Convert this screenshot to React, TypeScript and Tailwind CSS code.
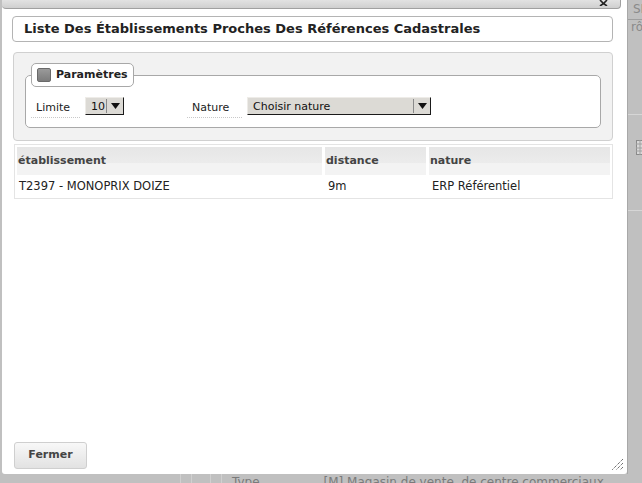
const font = "font-['DejaVu_Sans','Liberation_Sans',sans-serif]";

function NativeSelect({ value, width, sep }: { value: string; width: string; sep: string }) {
  return (
    <div
      className={`flex h-[18px] items-center border-t border-l border-t-[#eeece8] border-l-[#eeece8] border-r border-b border-r-[#1a1a1a] border-b-[#1a1a1a] bg-[#dcdad5] text-[11px] text-[#111] ${width}`}
    >
      <span className="pl-[5px] leading-none">{value}</span>
      <span className={`ml-auto h-[14px] w-px bg-[#8a8a8a] ${sep}`} />
      <span className="flex w-[16px] justify-center">
        <svg width="9" height="6" viewBox="0 0 9 6">
          <path d="M0 0h9L4.5 6z" fill="#111" />
        </svg>
      </span>
    </div>
  );
}

function Field({ label, width, children }: { label: string; width: string; children: React.ReactNode }) {
  return (
    <div className="flex items-start">
      <span className={`border-b border-dotted border-[#c8c8c8] pb-[3px] pl-[5px] pt-[4px] text-[11px] leading-[13px] text-[#222] ${width}`}>
        {label}
      </span>
      <div className="ml-[5px]">{children}</div>
    </div>
  );
}

export default function App() {
  return (
    <div className={`flex h-[483px] w-[642px] flex-col overflow-hidden bg-[#c0c0c0] ${font}`}>
      <div className="flex h-[474px] shrink-0">
        {/* dialog */}
        <div className="ml-[2px] flex w-[625px] shrink-0 flex-col rounded-b-[3px] bg-white">
          <div className="mr-[6px] flex h-[9px] shrink-0 items-end justify-end rounded-b-[4px] border-b border-r border-[#a0a0a0] bg-gradient-to-b from-[#e2e2e2] to-[#cfcfcf] pr-[12px]">
            <svg width="9" height="6" viewBox="0 0 9 6" className="mb-[2px]">
              <path d="M1 0l3.5 3.5L8 0M1 6l3.5-2.5L8 6" stroke="#222" strokeWidth="1.6" fill="none" />
            </svg>
          </div>

          <div className="ml-[10px] mr-[14px] mt-[7px] flex h-[26px] items-center rounded-[4px] border border-[#b4b4b4] px-[11px] text-[13px] font-bold text-[#222]">
            Liste Des Établissements Proches Des Références Cadastrales
          </div>

          <div className="ml-[11px] mr-[14px] mt-[10px] h-[89px] rounded-[4px] border border-[#d0d0d0] bg-[#f2f2f2] px-[11px] pt-[10px]">
            <fieldset className="h-[65px] rounded-[5px] border border-[#a8a8a8] bg-white px-[5px]">
              <legend className="flex h-[24px] items-center gap-[5px] rounded-[5px] border border-[#a8a8a8] bg-white px-[5px] text-[11px] font-bold text-[#222]">
                <span className="h-[14px] w-[14px] rounded-[2px] border border-[#6a6a6a] bg-gradient-to-b from-[#9a9a9a] to-[#7c7c7c]" />
                Paramètres
              </legend>
              <div className="mt-[10px] flex gap-[63px]">
                <Field label="Limite" width="w-[49px]">
                  <NativeSelect value="10" width="w-[39px]" sep="ml-[2px]" />
                </Field>
                <Field label="Nature" width="w-[55px]">
                  <NativeSelect value="Choisir nature" width="w-[184px]" sep="" />
                </Field>
              </div>
            </fieldset>
          </div>

          <div className="ml-[12px] mr-[14px] mt-[3px] border border-[#e4e4e4] p-[2px]">
            <div className="grid grid-cols-[305px_101px_1fr] gap-x-[3px] gap-y-[1px] text-[11px]">
              {["établissement", "distance", "nature"].map((h) => (
                <div
                  key={h}
                  className="flex h-[28px] items-center bg-[linear-gradient(#e6e6e6_0%,#ececec_58%,#f3f3f3_59%,#f3f3f3_100%)] pl-[1px] font-bold text-[#444]"
                >
                  {h}
                </div>
              ))}
              <div className="flex h-[20px] items-center pl-[2px] pt-[1px] text-[11.5px] text-[#222]">T2397 - MONOPRIX DOIZE</div>
              <div className="flex h-[20px] items-center pl-[3px] pt-[1px] text-[11.5px] text-[#222]">9m</div>
              <div className="flex h-[20px] items-center pl-[3px] pt-[1px] text-[11.5px] text-[#222]">ERP Référentiel</div>
            </div>
          </div>

          <div className="mt-auto flex items-end justify-between pb-[3px] pl-[12px] pr-[3px]">
            <button className="mb-[2px] h-[27px] w-[73px] rounded-[3px] border border-[#cfcfcf] bg-gradient-to-b from-[#f8f8f8] to-[#e2e2e2] text-[11px] font-bold text-[#444]">
              Fermer
            </button>
            <svg width="13" height="13" viewBox="0 0 13 13">
              <path d="M12 1L1 12M12 5L5 12M12 9L9 12" stroke="#333" strokeWidth="1" strokeDasharray="1 1" />
            </svg>
          </div>
        </div>

        {/* page behind the dialog, right edge */}
        <div className="flex min-w-0 flex-1 flex-col overflow-hidden border-l border-[#a8a8a8] text-[12px] text-[#8a8a8a]">
          <div className="h-[20px] shrink-0 border-b border-[#9e9e9e] pl-[5px] pt-[2px] leading-[14px]">SI</div>
          <div className="h-[95px] shrink-0 border-b border-[#d6d6d6] pl-[3px] leading-[14px]">rô</div>
          <div className="h-[96px] shrink-0 border-b border-[#d6d6d6] pl-[8px] pt-[25px]">
            <svg width="10" height="15" viewBox="0 0 10 15">
              <rect x="0.5" y="0.5" width="9" height="14" fill="#d8d8d8" stroke="#8a8a8a" />
              <path d="M0 4h10M0 8h10M0 11h10M4 0v15M7 0v15" stroke="#a0a0a0" />
            </svg>
          </div>
        </div>
      </div>

      {/* page behind the dialog, bottom edge */}
      <div className="flex h-[9px] items-start text-[12px] leading-[14px] text-[#7a7a7a]">
        <span className="ml-[180px] h-full w-[12px] border-x border-[#d0d0d0]" />
        <span className="ml-[18px] h-full w-[12px] border-x border-[#d0d0d0]" />
        <span className="ml-[10px] mt-[1px]">Type</span>
        <span className="ml-[64px] mt-[1px]">[M] Magasin de vente, de centre commerciaux</span>
      </div>
    </div>
  );
}
